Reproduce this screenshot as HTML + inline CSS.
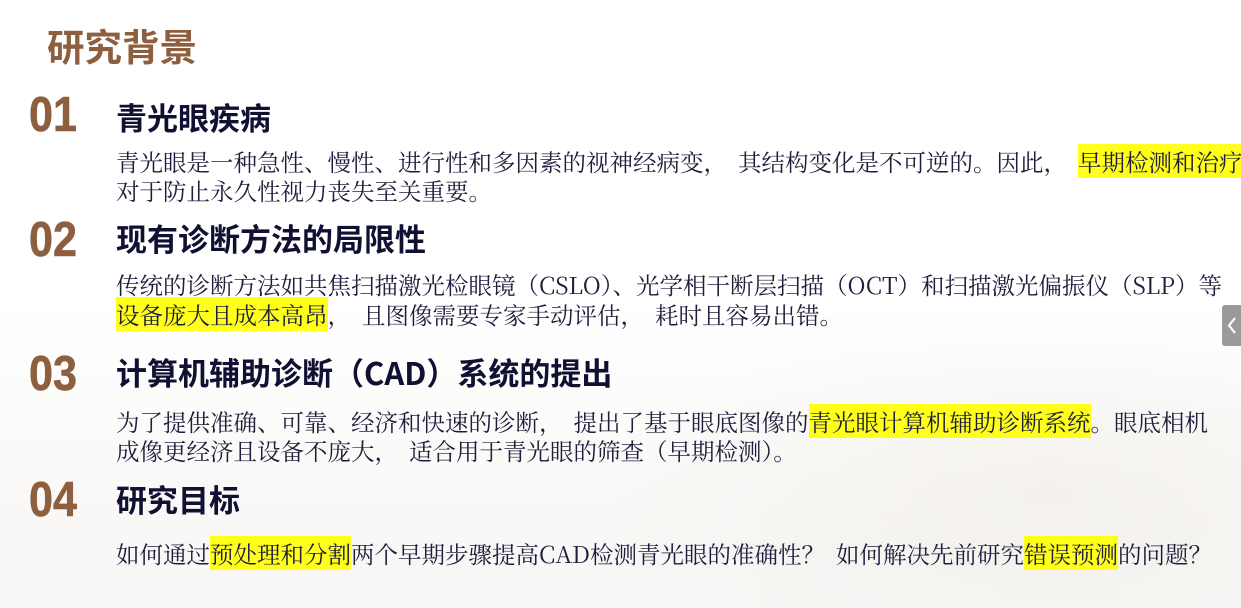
<!DOCTYPE html>
<html><head><meta charset="utf-8"><style>
html,body{margin:0;padding:0}
body{width:1241px;height:608px;position:relative;overflow:hidden;background:#fff;
background:linear-gradient(180deg,#fff 0%,#fff 50%,#faf9f7 80%,#f7f6f4 100%);}
.bg{position:absolute;left:600px;top:320px;width:641px;height:288px;
background:radial-gradient(ellipse at 70% 60%,rgba(232,226,218,0.35),rgba(255,255,255,0) 70%);}
.t{position:absolute;white-space:nowrap;}
.title{left:47px;top:24px;font:bold 37.5px/48px "Liberation Sans","Noto Sans CJK SC",sans-serif;color:#8d5f3e;}
.num{left:29px;font:bold 49px/50px "Liberation Sans",sans-serif;color:#8d5f3e;transform:scaleX(0.88);transform-origin:left;-webkit-text-stroke:0.6px #8d5f3e;}
.h{left:116px;font:bold 31px/40px "Noto Sans CJK SC","Liberation Sans",sans-serif;color:#101033;}
.b{left:116px;font:23.5px/30px "Noto Serif CJK SC",serif;color:#1e1e3c;}
.f{padding-right:11px;}
.y{background:#ffff1a;}
.tab{position:absolute;left:1222px;top:305px;width:19px;height:41px;background:#9a9a9a;border-radius:3px 0 0 3px;}
</style></head><body>
<div class="bg"></div>
<div class="t title">研究背景</div>

<div class="t num" style="top:90px">01</div>
<div class="t h" style="top:97px">青光眼疾病</div>
<div class="t b" style="top:146px">青光眼是一种急性、慢性、进行性和多因素的视神经病变<span class="f">，</span>其结构变化是不可逆的。因此<span class="f">，</span><span class="y">早期检测和治疗</span></div>
<div class="t b" style="top:175px">对于防止永久性视力丧失至关重要。</div>

<div class="t num" style="top:215px">02</div>
<div class="t h" style="top:218px">现有诊断方法的局限性</div>
<div class="t b" style="top:269px">传统的诊断方法如共焦扫描激光检眼镜（CSLO）、光学相干断层扫描（OCT）和扫描激光偏振仪（SLP）等</div>
<div class="t b" style="top:299px"><span class="y">设备庞大且成本高昂</span><span class="f">，</span>且图像需要专家手动评估<span class="f">，</span>耗时且容易出错。</div>

<div class="t num" style="top:349px">03</div>
<div class="t h" style="top:352px">计算机辅助诊断（CAD）系统的提出</div>
<div class="t b" style="top:406px">为了提供准确、可靠、经济和快速的诊断<span class="f">，</span>提出了基于眼底图像的<span class="y">青光眼计算机辅助诊断系统</span>。眼底相机</div>
<div class="t b" style="top:435px">成像更经济且设备不庞大<span class="f">，</span>适合用于青光眼的筛查（早期检测）。</div>

<div class="t num" style="top:475px">04</div>
<div class="t h" style="top:479px">研究目标</div>
<div class="t b" style="top:538px">如何通过<span class="y">预处理和分割</span>两个早期步骤提高CAD检测青光眼的准确性<span class="f">？</span>如何解决先前研究<span class="y">错误预测</span>的问题<span class="f">？</span></div>

<div class="tab"><svg width="19" height="41" viewBox="0 0 19 41"><path d="M13 13 L7 20.5 L13 28" fill="none" stroke="#fff" stroke-width="2.2"/></svg></div>
</body></html>
